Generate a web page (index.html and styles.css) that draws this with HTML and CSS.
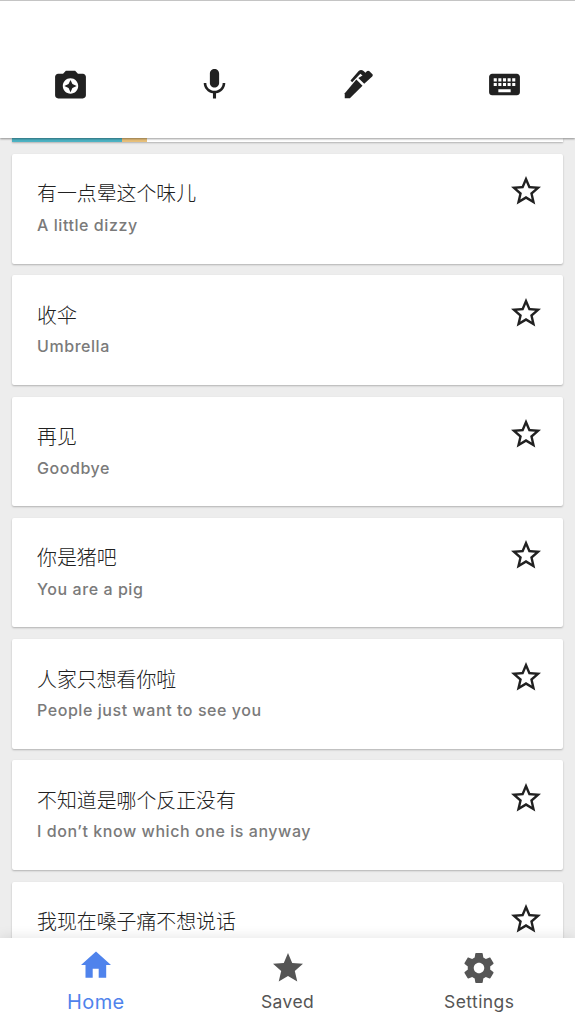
FILE: index.html
```
<!DOCTYPE html>
<html lang="zh-CN">
<head>
    <meta charset="UTF-8">
    <meta name="viewport" content="width=device-width, initial-scale=1.0">
    <title>Translate</title>
    <link rel="stylesheet" href="styles.css">
</head>
<body>
    <svg width="0" height="0" class="defs">
        <symbol id="star-outline" viewBox="0 0 24 24">
            <path d="M22 9.24l-7.19-.62L12 2 9.19 8.63 2 9.24l5.46 4.73L5.82 21 12 17.27 18.18 21l-1.63-7.03L22 9.24zM12 15.4l-3.76 2.27 1-4.28-3.32-2.88 4.38-.38L12 6.1l1.71 4.04 4.38.38-3.32 2.88 1 4.28L12 15.4z"/>
        </symbol>
    </svg>
    <div class="app">
        <header class="input-bar">
            <svg class="input-icon" viewBox="0 0 24 24"><path d="M9 3L7.17 5H4c-1.1 0-2 .9-2 2v12c0 1.1.9 2 2 2h16c1.1 0 2-.9 2-2V7c0-1.1-.9-2-2-2h-3.17L15 3H9zm3 15c-2.76 0-5-2.24-5-5s2.24-5 5-5 5 2.24 5 5-2.24 5-5 5zm0-1l1.25-2.75L16 13l-2.75-1.25L12 9l-1.25 2.75L8 13l2.75 1.25z"/></svg>
            <svg class="input-icon" viewBox="0 0 24 24"><path d="M12 14c1.66 0 3-1.34 3-3V5c0-1.66-1.34-3-3-3S9 3.34 9 5v6c0 1.66 1.34 3 3 3zm5.3-3c0 3-2.54 5.1-5.3 5.1S6.7 14 6.7 11H5c0 3.41 2.72 6.23 6 6.72V21h2v-3.28c3.28-.48 6-3.3 6-6.72h-1.7z"/></svg>
            <svg class="input-icon" viewBox="0 0 24 24"><path d="M3.1 17.6v3.3h3.3l8.2-8.1-4-4z"/><path d="M11.9 7.8l3.8 3.7 5.200-4.700c.5-.5.5-1.100 0-1.600l-1.800-1.800c-.5-.5-1.200-.5-1.700 0l-.9.900-1.200-1.100c-1.100-.9-2.200-.9-3.200 0L6.800 9.400l1.100 1.100L13.200 5.100l1.400 1z"/></svg>
            <svg class="input-icon" viewBox="0 0 24 24"><path d="M20 5H4c-1.1 0-2 .9-2 2v10c0 1.1.9 2 2 2h16c1.1 0 2-.9 2-2V7c0-1.1-.9-2-2-2zm-9 3h2v2h-2V8zm0 3h2v2h-2v-2zM8 8h2v2H8V8zm0 3h2v2H8v-2zm-1 2H5v-2h2v2zm0-3H5V8h2v2zm9 7H8v-2h8v2zm0-4h-2v-2h2v2zm0-3h-2V8h2v2zm3 3h-2v-2h2v2zm0-3h-2V8h2v2z"/></svg>
        </header>

        <main class="history">
            <div class="promo">
                <div class="promo-teal"></div>
                <div class="promo-sand"></div>
            </div>
            <div class="card">
                <div>
                    <div class="source">有一点晕这个味儿</div>
                    <div class="translation">A little dizzy</div>
                </div>
                <svg class="star"><use href="#star-outline"/></svg>
            </div>
            <div class="card">
                <div>
                    <div class="source">收伞</div>
                    <div class="translation">Umbrella</div>
                </div>
                <svg class="star"><use href="#star-outline"/></svg>
            </div>
            <div class="card">
                <div>
                    <div class="source">再见</div>
                    <div class="translation">Goodbye</div>
                </div>
                <svg class="star"><use href="#star-outline"/></svg>
            </div>
            <div class="card">
                <div>
                    <div class="source">你是猪吧</div>
                    <div class="translation">You are a pig</div>
                </div>
                <svg class="star"><use href="#star-outline"/></svg>
            </div>
            <div class="card">
                <div>
                    <div class="source">人家只想看你啦</div>
                    <div class="translation">People just want to see you</div>
                </div>
                <svg class="star"><use href="#star-outline"/></svg>
            </div>
            <div class="card">
                <div>
                    <div class="source">不知道是哪个反正没有</div>
                    <div class="translation">I don’t know which one is anyway</div>
                </div>
                <svg class="star"><use href="#star-outline"/></svg>
            </div>
            <div class="card">
                <div>
                    <div class="source">我现在嗓子痛不想说话</div>
                </div>
                <svg class="star"><use href="#star-outline"/></svg>
            </div>
        </main>

        <nav class="tabs">
            <a class="tab active">
                <svg class="tab-icon" viewBox="0 0 24 24"><path d="M9.8 20.500v-6h4v6h5v-8.500h3.200L12 3 2 12h3v8.500z"/></svg>
                <span>Home</span>
            </a>
            <a class="tab">
                <svg class="tab-icon" viewBox="0 0 24 24"><path d="M12 17.27L18.18 21l-1.64-7.03L22 9.24l-7.19-.61L12 2 9.19 8.63 2 9.24l5.46 4.73L5.82 21z"/></svg>
                <span>Saved</span>
            </a>
            <a class="tab">
                <svg class="tab-icon" viewBox="0 0 24 24"><path d="M19.43 12.98c.04-.32.07-.64.07-.98s-.03-.66-.07-.98l2.11-1.65c.19-.15.24-.42.12-.64l-2-3.46c-.12-.22-.39-.3-.61-.22l-2.49 1c-.52-.4-1.08-.73-1.69-.98l-.38-2.65C14.46 2.18 14.25 2 14 2h-4c-.25 0-.46.18-.49.42l-.38 2.65c-.61.25-1.17.59-1.69.98l-2.49-1c-.23-.09-.49 0-.61.22l-2 3.46c-.13.22-.07.49.12.64l2.11 1.65c-.04.32-.07.65-.07.98s.03.66.07.98l-2.11 1.65c-.19.15-.24.42-.12.64l2 3.46c.12.22.39.3.61.22l2.49-1c.52.4 1.08.73 1.69.98l.38 2.65c.03.24.24.42.49.42h4c.25 0 .46-.18.49-.42l.38-2.65c.61-.25 1.17-.59 1.69-.98l2.49 1c.23.09.49 0 .61-.22l2-3.46c.12-.22.07-.49-.12-.64l-2.11-1.65zM12 15.5c-1.93 0-3.5-1.57-3.5-3.5s1.57-3.5 3.5-3.5 3.5 1.57 3.5 3.5-1.57 3.5-3.5 3.5z"/></svg>
                <span>Settings</span>
            </a>
        </nav>
    </div>
</body>
</html>
```
FILE: styles.css
```
* { box-sizing: border-box; }
body { margin: 0; font-family: Inter, "Noto Sans CJK SC", sans-serif; background-color: #ededed; }
svg { display: block; fill: currentColor; }
.defs { display: none; }
.app { display: flex; flex-direction: column; height: 100vh; overflow: hidden; }

.input-bar { display: flex; gap: 107px; flex: none; height: 138px; padding: 65px 0 0 52px; background-color: #fff; border-top: 1px solid #c4c4c4; box-shadow: 0 1px 2px rgba(0, 0, 0, 0.4); color: #212121; z-index: 1; }
.input-icon { flex: none; width: 37px; height: 37px; }
.input-icon:last-child { margin-left: 2px; }

.history { flex: 1; min-height: 0; overflow: hidden; padding: 0 12px; }
.promo { display: flex; height: 4px; margin-bottom: 12px; background-color: #fff; box-shadow: 0 1px 2px rgba(0, 0, 0, 0.25); }
.promo-teal { width: 110px; background-color: #4db3c4; }
.promo-sand { width: 25px; background-color: #e8c07a; }
.card { display: flex; justify-content: space-between; height: 109.5px; margin-bottom: 11.8px; padding: 19.4px 19.5px 0 25px; background-color: #fff; border-radius: 2px; box-shadow: 0 1px 2px rgba(0, 0, 0, 0.25); }
.source { margin-top: 5px; font-family: "Noto Sans CJK SC", sans-serif; font-size: 19.9px; font-weight: 300; line-height: 30px; color: #212121; }
.translation { margin-top: 4.6px; font-size: 16px; font-weight: 500; line-height: 24px; letter-spacing: 0.56px; color: #7a7a7a; }
.star { width: 36px; height: 36px; color: #212121; }

.tabs { display: flex; flex: none; height: 86px; background-color: #fff; box-shadow: 0 -1px 12px rgba(0, 0, 0, 0.1); z-index: 1; }
.tab { display: flex; flex: 1; flex-direction: column; align-items: center; padding-top: 12px; font-size: 17.5px; line-height: 24px; letter-spacing: 0.4px; color: #555; }
.tab-icon { width: 36px; height: 36px; margin-bottom: 4px; }
.tab.active { padding-top: 9px; font-size: 20px; color: #4f83ec; }
.tab.active .tab-icon { margin-bottom: 7px; }
```
